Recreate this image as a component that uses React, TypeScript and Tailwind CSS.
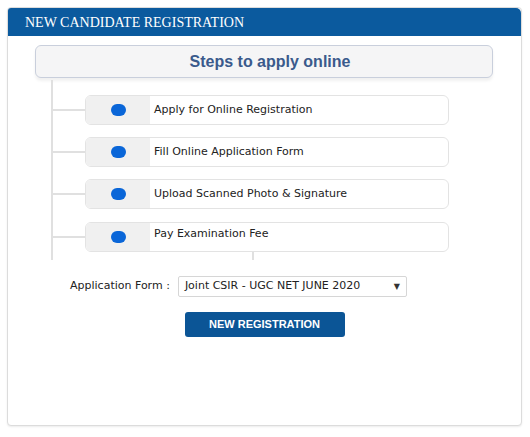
const STEPS = [
  { label: 'Apply for Online Registration', top: false },
  { label: 'Fill Online Application Form', top: false },
  { label: 'Upload Scanned Photo & Signature', top: false },
  { label: 'Pay Examination Fee', top: true },
]

export default function App() {
  return (
    <div className="w-[530px] h-[437px] bg-white pt-[7px] pl-[7px]">
      <div className="w-[515px] h-[419px] border border-[#dcdcdc] rounded-[4px] shadow-[0_1px_2px_rgba(0,0,0,0.08)] bg-white overflow-hidden">
        {/* Panel header */}
        <div className="h-[28px] bg-[#0b5a9e] rounded-tr-[5px] flex items-center pl-[17px]">
          <span className="text-white text-[14px] uppercase" style={{ fontFamily: '"Liberation Serif", serif' }}>
            New Candidate Registration
          </span>
        </div>

        <div className="pt-[9px]" style={{ fontFamily: '"DejaVu Sans", Verdana, sans-serif' }}>
          {/* Steps title */}
          <div className="ml-[27px] w-[458px] h-[33px] rounded-[6px] border border-[#c9cfdc] bg-[#f5f5f6] shadow-[0_3px_3px_rgba(0,0,0,0.06)] flex items-center justify-center pl-[12px]">
            <span className="text-[16px] font-bold text-[#3a5a8c]" style={{ fontFamily: '"Liberation Sans", Arial, sans-serif' }}>
              Steps to apply online
            </span>
          </div>

          {/* Steps tree */}
          <div className="ml-[43px] mt-[2px] border-l-2 border-[#e0e0e0] pt-[15px] pb-[8px] flex flex-col gap-[12px]">
            {STEPS.map((step, i) => (
              <div key={step.label} className={`flex items-center ${i === 3 ? 'mt-[1px]' : ''}`}>
                <div className="w-[32px] h-[2px] bg-[#e0e0e0]" />
                <div className="w-[364px] h-[30px] rounded-[6px] border border-[#e3e3e3] bg-white flex overflow-hidden">
                  <div className="w-[64px] bg-[#f0f0f0] flex items-center justify-center">
                    <span className="w-[15px] h-[12px] rounded-full bg-[#0a66d8]" />
                  </div>
                  <div className={`pl-[4px] flex ${step.top ? 'items-start pt-[3px]' : 'items-center'} text-[11px] text-[#222]`}>
                    {step.label}
                  </div>
                </div>
              </div>
            ))}
          </div>
          <div className="ml-[244px] -mt-[8px] w-[2px] h-[8px] bg-[#e0e0e0]" />

          {/* Application form select */}
          <div className="mt-[16px] pl-[62px] flex items-center gap-[8px]">
            <span className="text-[11px] text-[#222]">Application Form :</span>
            <div className="w-[229px] h-[21px] border border-[#d6d6d6] rounded-[2px] bg-white flex items-center justify-between pl-[6px] pr-[6px]">
              <span className="text-[11px] text-[#222]">Joint CSIR - UGC NET JUNE 2020</span>
              <span className="text-[8px] text-[#333] leading-none">▼</span>
            </div>
          </div>

          {/* Submit */}
          <div className="mt-[15px] flex justify-center">
            <button className="w-[160px] h-[25px] rounded-[3px] bg-[#0b5596] text-white text-[11px] font-bold" style={{ fontFamily: '"Liberation Sans", Arial, sans-serif' }}>
              NEW REGISTRATION
            </button>
          </div>
        </div>
      </div>
    </div>
  )
}
